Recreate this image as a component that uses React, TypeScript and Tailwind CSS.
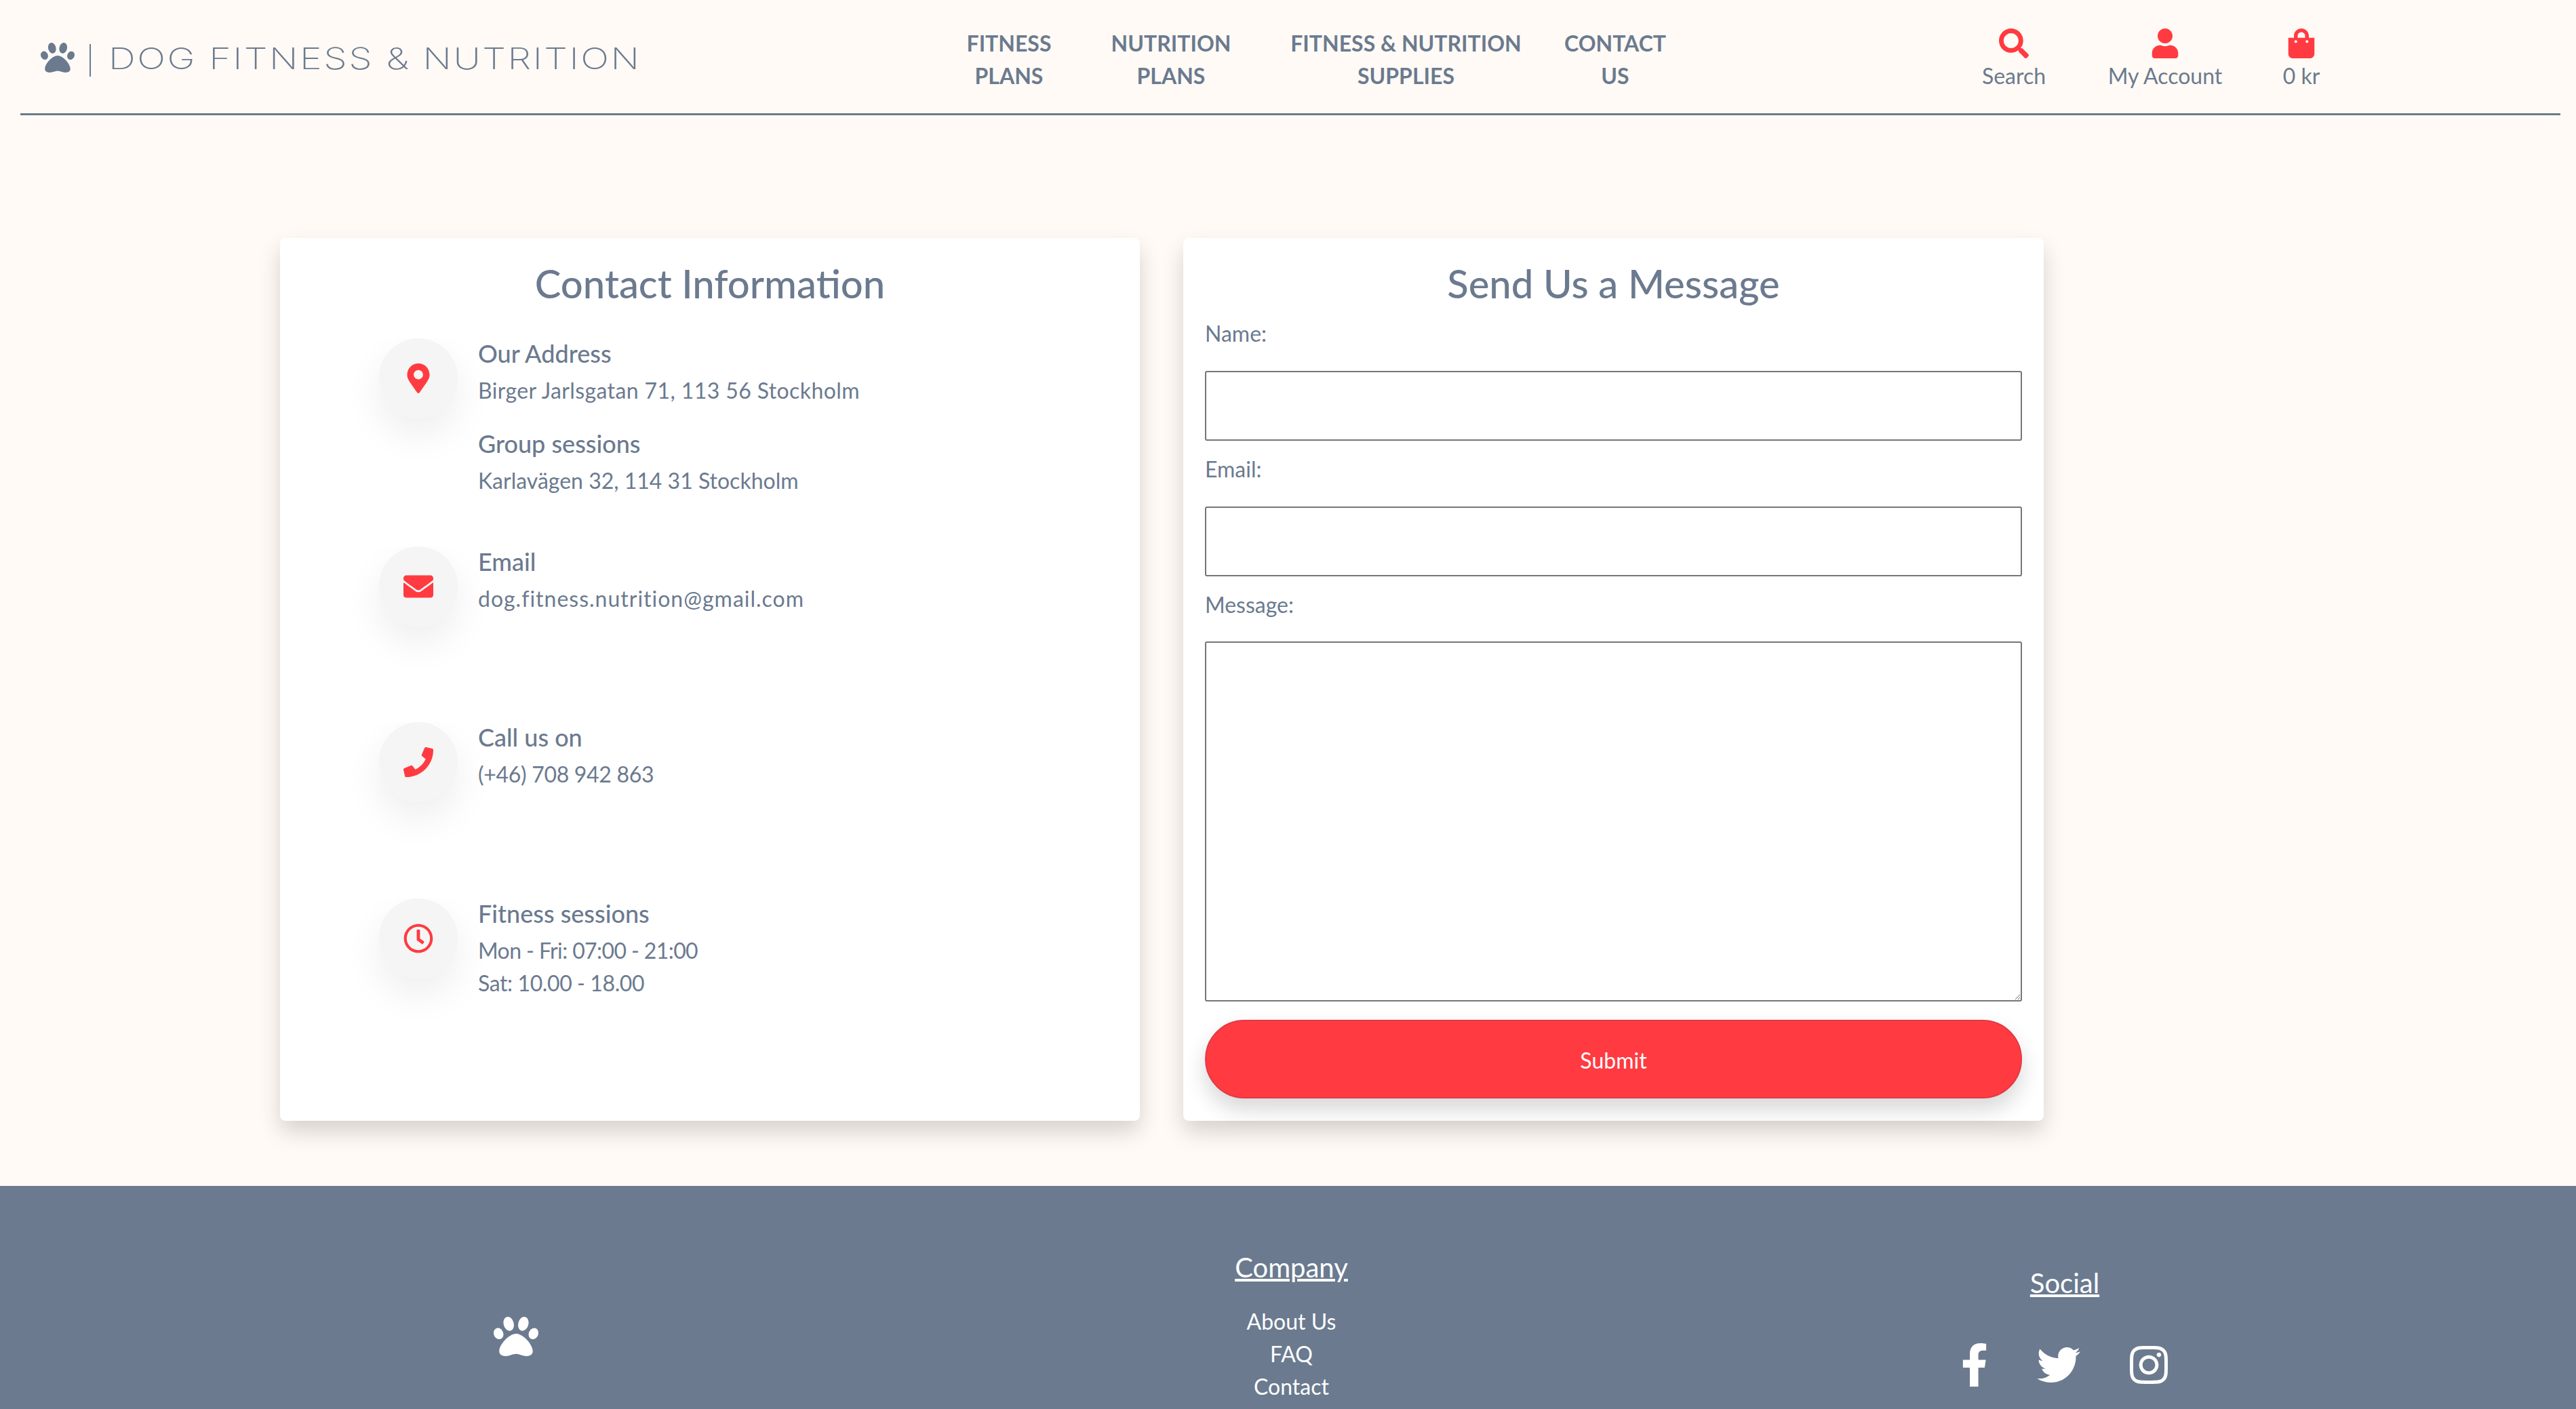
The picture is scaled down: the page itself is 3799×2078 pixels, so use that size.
import { FaPaw, FaSearch, FaUser, FaShoppingBag, FaMapMarkerAlt, FaEnvelope, FaPhone, FaRegClock, FaFacebookF, FaTwitter, FaInstagram } from "react-icons/fa";
import type { ReactNode } from "react";

function NavLink({ a, b, cls }: { a: string; b: string; cls: string }) {
  return (
    <a className={`flex flex-col items-center font-bold whitespace-nowrap leading-[48px] ${cls}`}>
      <span>{a}</span>
      <span>{b}</span>
    </a>
  );
}

function Tool({ icon, label, cls }: { icon: ReactNode; label: string; cls: string }) {
  return (
    <a className={`flex flex-col items-center whitespace-nowrap ${cls}`}>
      <span className="flex h-[48px] items-center text-[#ff3b41]">{icon}</span>
      <span className="leading-[48px]">{label}</span>
    </a>
  );
}

function Row({ icon, h, children }: { icon: ReactNode; h: string; children: ReactNode }) {
  return (
    <div className={`flex overflow-hidden pl-[146px] ${h}`}>
      <div className="flex h-[118px] w-[116px] shrink-0 items-center justify-center rounded-full bg-[#f5f5f5] text-[#ff3b41] shadow-[0_24px_56px_rgba(0,0,0,0.07)]">
        {icon}
      </div>
      <div className="-mt-[5px] ml-[30px]">{children}</div>
    </div>
  );
}

const Title = ({ children }: { children: ReactNode }) => (
  <h3 className="mb-[4px] text-[36px] font-medium leading-[54px]">{children}</h3>
);

const fieldCls = "block w-full rounded-[3px] border-2 border-[#767676] bg-white";

export default function App() {
  return (
    <div className="h-[2078px] overflow-hidden bg-[#fffaf5] font-['Lato','Noto_Sans',sans-serif] text-[32px] leading-[48px] text-[#6b7a8f]">
      <header className="flex h-[167px] items-start">
        <a className="mt-[54px] ml-[60px] flex items-start">
          <FaPaw className="mt-[6px] text-[50px]" />
          <span className="mt-[11px] ml-[22px] h-[48px] w-[2px] bg-[#6b7a8f]" />
          <span className="mt-[1px] ml-[26px] origin-left scale-x-[1.26] font-['Inter',sans-serif] text-[44px] font-extralight leading-[62px] tracking-[2px] whitespace-nowrap">DOG FITNESS &amp; NUTRITION</span>
        </a>
        <nav className="absolute top-[40px] left-[1427px] flex">
          <NavLink a="FITNESS" b="PLANS" cls="w-[122px]" />
          <NavLink a="NUTRITION" b="PLANS" cls="ml-[91px] w-[174px]" />
          <NavLink a="FITNESS & NUTRITION" b="SUPPLIES" cls="ml-[88px] w-[343px]" />
          <NavLink a="CONTACT" b="US" cls="ml-[65px] w-[144px]" />
        </nav>
        <div className="absolute top-[40px] left-[2922px] flex">
          <Tool icon={<FaSearch className="text-[44px]" />} label="Search" cls="w-[96px]" />
          <Tool icon={<FaUser className="text-[44px]" />} label="My Account" cls="ml-[91px] w-[168px]" />
          <Tool icon={<FaShoppingBag className="text-[44px]" />} label="0 kr" cls="ml-[90px] w-[54px]" />
        </div>
      </header>
      <div className="mr-[23px] ml-[30px] h-[3px] bg-[#6c7a89]" />

      <main className="ml-[413px] flex h-[1579px] items-start gap-[64px] pt-[181px]">
        <section className="h-[1302px] w-[1268px] rounded-[8px] bg-white pt-[25px] shadow-[0_16px_32px_rgba(0,0,0,0.16)]">
          <h2 className="mb-[39px] text-center text-[58px] font-medium leading-[84px]">Contact Information</h2>
          <Row icon={<FaMapMarkerAlt className="text-[44px]" />} h="h-[307px]">
            <Title>Our Address</Title>
            <p className="tracking-[0.4px]">Birger Jarlsgatan 71, 113 56 Stockholm</p>
            <div className="mt-[27px]">
              <Title>Group sessions</Title>
              <p>Karlavägen 32, 114 31 Stockholm</p>
            </div>
          </Row>
          <Row icon={<FaEnvelope className="text-[44px]" />} h="h-[259px]">
            <Title>Email</Title>
            <p className="tracking-[1px]">dog.fitness.nutrition@gmail.com</p>
          </Row>
          <Row icon={<FaPhone className="text-[44px]" />} h="h-[260px]">
            <Title>Call us on</Title>
            <p className="-tracking-[0.3px]">(+46) 708 942 863</p>
          </Row>
          <Row icon={<FaRegClock className="text-[44px]" />} h="h-[248px]">
            <Title>Fitness sessions</Title>
            <p className="-tracking-[0.6px]">Mon - Fri: 07:00 - 21:00</p>
            <p className="-tracking-[0.4px]">Sat: 10.00 - 18.00</p>
          </Row>
        </section>

        <section className="h-[1302px] w-[1269px] rounded-[8px] bg-white px-[32px] pt-[25px] shadow-[0_16px_32px_rgba(0,0,0,0.16)]">
          <h2 className="mb-[8px] text-center text-[58px] font-medium leading-[84px]">Send Us a Message</h2>
          <form>
            <label className="mb-[31px] block">Name:</label>
            <input className={`${fieldCls} mb-[18px] h-[103px]`} />
            <label className="mb-[31px] block">Email:</label>
            <input className={`${fieldCls} mb-[18px] h-[103px]`} />
            <label className="mb-[30px] block">Message:</label>
            <textarea className={`${fieldCls} mb-[27px] h-[531px]`} />
            <button type="button" className="flex h-[116px] w-full items-center justify-center rounded-full border-2 border-[#e03a45] bg-[#ff3b41] pt-[3px] text-white shadow-[0_16px_32px_rgba(0,0,0,0.16)]">
              Submit
            </button>
          </form>
        </section>
      </main>

      <footer className="h-[329px] bg-[#6b7a8f] text-white">
        <div className="ml-[190px] grid w-[3426px] grid-cols-3 text-center">
          <div className="flex justify-center pt-[189px]">
            <FaPaw className="text-[66px]" />
          </div>
          <div className="ml-[3px] pt-[90px]">
            <h4 className="mb-[26px] text-[40px] leading-[60px] underline">Company</h4>
            <ul>
              <li>About Us</li>
              <li>FAQ</li>
              <li>Contact</li>
            </ul>
          </div>
          <div className="pt-[113px]">
            <h4 className="mb-[59px] text-[40px] leading-[60px] underline">Social</h4>
            <div className="-ml-[9px] flex items-center justify-center gap-[60px]">
              <FaFacebookF className="text-[64px]" />
              <FaTwitter className="mr-[9px] text-[64px]" />
              <FaInstagram className="text-[64px]" />
            </div>
          </div>
        </div>
      </footer>
    </div>
  );
}
